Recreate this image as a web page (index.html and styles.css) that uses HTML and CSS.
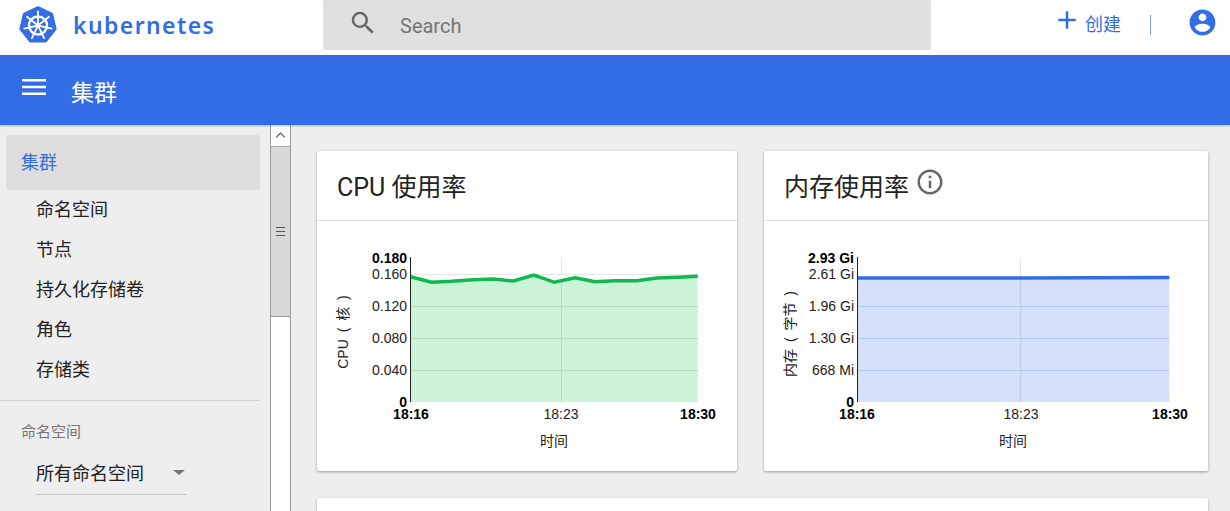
FILE: index.html
```html
<!DOCTYPE html>
<html lang="zh">

<head>
    <meta charset="UTF-8">
    <title>集群 - Kubernetes Dashboard</title>
    <link rel="stylesheet" href="styles.css">
</head>

<body>
    <header class="topbar">
        <a class="brand">
            <svg class="logo" viewBox="0 0 38 38" width="38" height="38">
                <polygon points="19,0.5 33.6,7.5 37.2,23.3 27.1,36 10.9,36 0.8,23.3 4.4,7.5" fill="#326de6" stroke="#326de6" stroke-width="1" stroke-linejoin="round"/>
                <g fill="none" stroke="#fff" stroke-linecap="round">
                    <circle cx="19" cy="19.5" r="9" stroke-width="2.4"/>
                    <g stroke-width="1.8">
                        <path d="M19 19.5V5.5"/>
                        <path d="M19 19.5L30 10.8"/>
                        <path d="M19 19.5L32.7 22.6"/>
                        <path d="M19 19.5L25.1 32.1"/>
                        <path d="M19 19.5L12.9 32.1"/>
                        <path d="M19 19.5L5.3 22.6"/>
                        <path d="M19 19.5L8 10.8"/>
                    </g>
                </g>
                <circle cx="19" cy="19.5" r="2.2" fill="#fff"/>
            </svg>
            <span class="brand-name">kubernetes</span>
        </a>
        <div class="search">
            <svg class="search-icon" viewBox="0 0 24 24" width="30" height="30">
                <path fill="#666" d="M15.5 14h-.79l-.28-.27A6.47 6.47 0 0 0 16 9.5 6.5 6.5 0 1 0 9.5 16c1.61 0 3.09-.59 4.23-1.57l.27.28v.79l5 4.99L20.49 19l-4.99-5zm-6 0C7.01 14 5 11.99 5 9.5S7.01 5 9.5 5 14 7.01 14 9.5 11.99 14 9.5 14z"/>
            </svg>
            <span class="search-text">Search</span>
        </div>
        <div class="actions">
            <a class="create">
                <svg viewBox="0 0 24 24" width="30" height="30">
                    <path fill="#326de6" d="M19 13h-6v6h-2v-6H5v-2h6V5h2v6h6v2z"/>
                </svg>
                <span>创建</span>
            </a>
            <span class="divider"></span>
            <svg class="account" viewBox="0 0 24 24" width="31" height="31">
                <path fill="#326de6" d="M12 2C6.48 2 2 6.48 2 12s4.48 10 10 10 10-4.48 10-10S17.52 2 12 2zm0 3c1.66 0 3 1.34 3 3s-1.34 3-3 3-3-1.34-3-3 1.34-3 3-3zm0 14.2a7.2 7.2 0 0 1-6-3.22c.03-1.99 4-3.08 6-3.08 1.99 0 5.97 1.09 6 3.08a7.2 7.2 0 0 1-6 3.22z"/>
            </svg>
        </div>
    </header>

    <div class="titlebar">
        <svg class="menu" viewBox="0 0 24 16" width="24" height="16">
            <path fill="#fff" d="M0 0h24v2.4H0zM0 6.8h24v2.4H0zM0 13.6h24V16H0z"/>
        </svg>
        <h1>集群</h1>
    </div>

    <div class="layout">
        <nav class="sidebar">
            <a class="nav-top">集群</a>
            <ul class="nav-list">
                <li>命名空间</li>
                <li>节点</li>
                <li>持久化存储卷</li>
                <li>角色</li>
                <li>存储类</li>
            </ul>
            <hr class="nav-line">
            <div class="ns-label">命名空间</div>
            <div class="ns-select">
                <span>所有命名空间</span>
                <i class="caret"></i>
            </div>
        </nav>

        <div class="scrollbar">
            <div class="scroll-up">
                <svg viewBox="0 0 20 20" width="20" height="20">
                    <path d="M5.5 12.5L10 8l4.5 4.5" fill="none" stroke="#555" stroke-width="1.2"/>
                </svg>
            </div>
            <div class="scroll-thumb"><span></span></div>
        </div>

        <main class="content">
            <div class="charts">
                <section class="card chart-card cpu-card">
                    <h2 class="card-title">CPU 使用率</h2>
                    <svg class="chart" viewBox="317 221 420 250" width="420" height="250">
                        <path class="grid-faint" d="M411 274.5H698M561.5 258V276"/>
                        <polygon class="area-green" points="410.5,276.7 431.7,282.3 451.7,281.3 473.3,279.7 493.3,279 513.3,281 534,275 554.3,282.3 575,277.7 595,281.7 615,280.7 636.7,280.7 656.7,278 678.3,277.3 697.7,276.3 697.7,402 410.5,402"/>
                        <path class="grid" d="M411 306.5H698M411 338.5H698M411 370.5H698M561.5 282V402"/>
                        <polyline class="line-green" points="410.5,276.7 431.7,282.3 451.7,281.3 473.3,279.7 493.3,279 513.3,281 534,275 554.3,282.3 575,277.7 595,281.7 615,280.7 636.7,280.7 656.7,278 678.3,277.3 697.7,276.3"/>
                        <path class="axis" d="M410.5 257V402"/>
                        <g class="ticks-y">
                            <text class="strong" x="407" y="263">0.180</text>
                            <text x="407" y="279">0.160</text>
                            <text x="407" y="311">0.120</text>
                            <text x="407" y="343">0.080</text>
                            <text x="407" y="375">0.040</text>
                            <text class="strong" x="407" y="407">0</text>
                        </g>
                        <g class="ticks-x">
                            <text class="strong" x="411" y="419">18:16</text>
                            <text x="561" y="419">18:23</text>
                            <text class="strong" x="698" y="419">18:30</text>
                        </g>
                        <text class="axis-name" x="554" y="446">时间</text>
                        <text class="axis-name" transform="translate(348 332) rotate(-90)">CPU ( 核 )</text>
                    </svg>
                </section>
                <section class="card chart-card mem-card">
                    <h2 class="card-title">内存使用率
                        <svg class="info" viewBox="0 0 24 24" width="30" height="30">
                            <path fill="#666" d="M11 7h2v2h-2zm0 4h2v6h-2zm1-9C6.48 2 2 6.48 2 12s4.48 10 10 10 10-4.48 10-10S17.52 2 12 2zm0 18c-4.41 0-8-3.59-8-8s3.59-8 8-8 8 3.59 8 8-3.59 8-8 8z"/>
                        </svg>
                    </h2>
                    <svg class="chart" viewBox="764 221 444 250" width="444" height="250">
                        <path class="grid-faint" d="M1020.5 258V277"/>
                        <polygon class="area-blue" points="857.3,278 1169.3,277.6 1169.3,402 857.3,402"/>
                        <path class="grid-blue" d="M858 306.5H1169M858 338.5H1169M858 370.5H1169"/>
                        <path class="vgrid" d="M1020.5 278V402"/>
                        <polyline class="line-blue" points="857.3,278 1020,277.9 1169.3,277.6"/>
                        <path class="axis" d="M857.5 257V402"/>
                        <g class="ticks-y">
                            <text class="strong" x="854" y="263">2.93 Gi</text>
                            <text x="854" y="279">2.61 Gi</text>
                            <text x="854" y="311">1.96 Gi</text>
                            <text x="854" y="343">1.30 Gi</text>
                            <text x="854" y="375">668 Mi</text>
                            <text class="strong" x="854" y="407">0</text>
                        </g>
                        <g class="ticks-x">
                            <text class="strong" x="857" y="419">18:16</text>
                            <text x="1021" y="419">18:23</text>
                            <text class="strong" x="1170" y="419">18:30</text>
                        </g>
                        <text class="axis-name" x="1013" y="446">时间</text>
                        <text class="axis-name" transform="translate(795 334) rotate(-90)">内存 ( 字节 )</text>
                    </svg>
                </section>
            </div>
            <section class="card next-card"></section>
        </main>
    </div>
</body>

</html>
```
FILE: styles.css
```css
* {
    margin: 0;
    padding: 0;
    box-sizing: border-box;
    list-style: none;
}

html,
body {
    height: 511px;
    overflow: hidden;
}

body {
    background-color: #eee;
    color: #222;
    font-family: "Liberation Sans", "Noto Sans CJK SC", sans-serif;
}

.topbar {
    display: flex;
    height: 55px;
    background-color: #fff;
}

.brand {
    display: flex;
    align-items: flex-start;
    width: 323px;
    padding: 6px 0 0 19px;
}

.brand-name {
    margin: 3px 0 0 16px;
    color: #326de6;
    font-family: "Noto Sans", sans-serif;
    font-size: 23px;
    font-weight: 600;
    line-height: 32px;
    letter-spacing: 1.4px;
}

.search {
    display: flex;
    align-items: center;
    width: 608px;
    height: 50px;
    padding: 0 0 0 25px;
    border-radius: 2px;
    background-color: #e0e0e0;
}

.search-icon {
    margin-top: -4px;
}

.search-text {
    margin: 2px 0 0 22px;
    color: #757575;
    font-family: Roboto, sans-serif;
    font-size: 20px;
}

.actions {
    display: flex;
    flex: 1;
    align-items: flex-start;
    padding: 5px 0 0 121px;
}

.create {
    display: flex;
    align-items: flex-start;
    color: #326de6;
    font-size: 18px;
}

.create span {
    margin: 7px 0 0 3px;
    line-height: 26px;
}

.divider {
    width: 1px;
    height: 20px;
    margin: 10px 0 0 29px;
    background-color: #7c9be0;
}

.account {
    margin: 2px 0 0 36px;
}

.titlebar {
    display: flex;
    height: 70px;
    padding-left: 22px;
    background-color: #326de6;
    box-shadow: 0 1px 2px rgba(0, 0, 0, .25);
    color: #fff;
    position: relative;
}

.menu {
    margin-top: 24px;
}

.titlebar h1 {
    margin: 20px 0 0 25px;
    font-size: 23px;
    font-weight: 400;
    line-height: 36px;
}

.layout {
    display: flex;
    height: 386px;
    overflow: hidden;
}

.sidebar {
    width: 270px;
    padding: 10px 10px 0 6px;
    background-color: #eee;
}

.nav-top {
    display: block;
    height: 55px;
    padding: 1px 0 0 15px;
    border-radius: 3px;
    background-color: #ddd;
    color: #326de6;
    font-size: 18px;
    line-height: 55px;
}

.nav-list {
    padding: 0 0 0 30px;
}

.nav-list li {
    height: 40px;
    font-size: 18px;
    line-height: 40px;
}

.nav-line {
    height: 1px;
    margin: 10px 0 0 -6px;
    border: 0;
    background-color: #d0d0d0;
}

.ns-label {
    margin: 22px 0 0 15px;
    color: #757575;
    font-size: 15px;
    line-height: 18px;
}

.ns-select {
    display: flex;
    align-items: center;
    justify-content: space-between;
    width: 151px;
    height: 41px;
    margin: 13px 0 0 30px;
    padding: 0 2px 4px 0;
    border-bottom: 1px solid #c6c6c6;
    font-size: 18px;
}

.caret {
    width: 0;
    height: 0;
    border-style: solid;
    border-width: 5px 6px 0 6px;
    border-color: #777 transparent transparent transparent;
}

.scrollbar {
    width: 21px;
    border-style: solid;
    border-width: 0 1px;
    border-color: #999;
    background-color: #fff;
}

.scroll-up {
    display: flex;
    height: 21px;
    padding: 0 0 2px;
    background-color: #fff;
}

.scroll-thumb {
    display: flex;
    align-items: center;
    justify-content: center;
    height: 171px;
    border-top: 1px solid #aaa;
    border-bottom: 1px solid #999;
    background-color: #d8d8d8;
}

.scroll-thumb span {
    width: 9px;
    height: 9px;
    border-style: solid;
    border-width: 1px 0;
    border-color: #555;
    background: linear-gradient(#555, #555) center / 100% 1px no-repeat;
}

.content {
    flex: 1;
    padding: 26px 22px 0 26px;
}

.charts {
    display: flex;
    gap: 27px;
}

.card {
    border-radius: 2px;
    background-color: #fff;
    box-shadow: 0 1px 3px rgba(0, 0, 0, .35);
}

.chart-card {
    height: 320px;
}

.cpu-card {
    width: 420px;
}

.mem-card {
    width: 444px;
}

.card-title {
    display: flex;
    align-items: flex-start;
    height: 70px;
    padding: 19px 0 0 20px;
    border-bottom: 1px solid #ddd;
    font-family: Roboto, "Noto Sans CJK SC", sans-serif;
    font-size: 25px;
    font-weight: 400;
    line-height: 36px;
}

.info {
    margin: -3px 0 0 6px;
}

.chart {
    display: block;
}

.chart text {
    fill: #222;
    font-size: 14px;
}

.chart .strong {
    fill: #000;
    font-weight: 700;
}

.ticks-y text {
    text-anchor: end;
}

.ticks-x text {
    text-anchor: middle;
}

.chart .axis-name {
    text-anchor: middle;
    word-spacing: 3px;
}

.area-green {
    fill: #cbf3d8;
}

.area-blue {
    fill: #d5e1fa;
}

.grid {
    fill: none;
    stroke: #b4dcc2;
}

.grid-blue {
    fill: none;
    stroke: #b2c4e8;
}

.grid-faint {
    fill: none;
    stroke: #e6e6e6;
}

.vgrid {
    fill: none;
    stroke: #c8d0e0;
    stroke-width: 2;
}

.line-green {
    fill: none;
    stroke: #10b84f;
    stroke-width: 3.5;
}

.line-blue {
    fill: none;
    stroke: #326de6;
    stroke-width: 3.5;
}

.axis {
    fill: none;
    stroke: #222;
}

.next-card {
    height: 13px;
    margin-top: 27px;
    border-radius: 2px 2px 0 0;
}
```
